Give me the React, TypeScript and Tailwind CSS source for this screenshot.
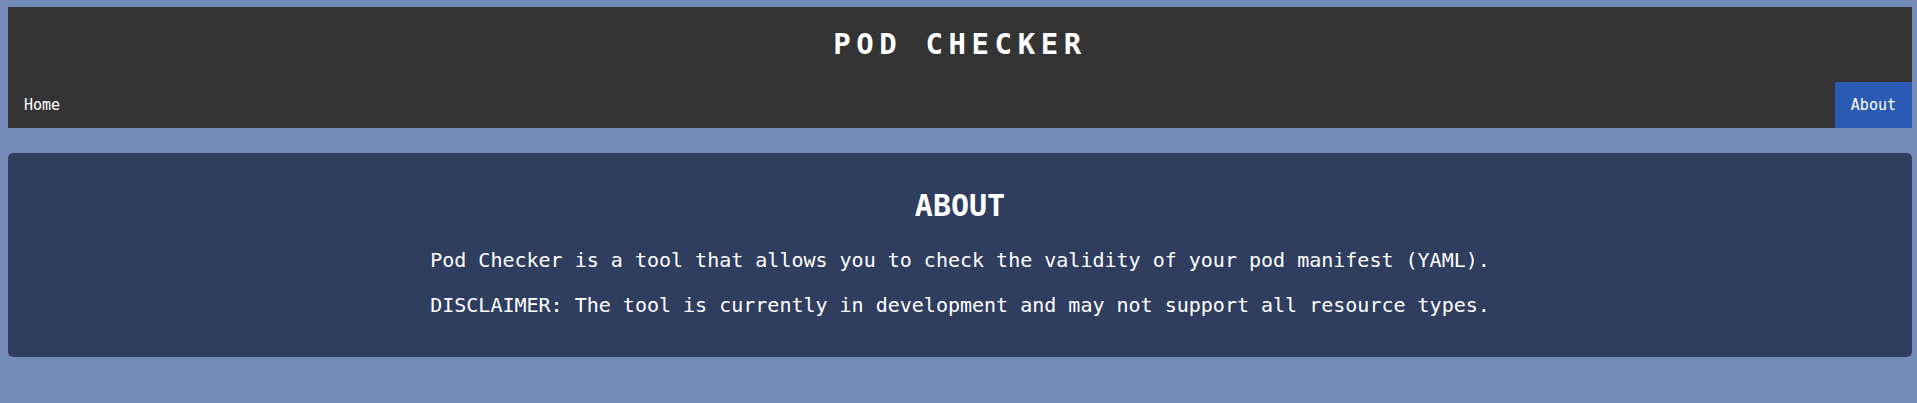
export default function App() {
  return (
    <div
      className="min-h-[403px] bg-[#748bb8] pt-[7px] pl-2 pr-[5px] text-white"
      style={{ fontFamily: '"DejaVu Sans Mono", monospace' }}
    >
      <header className="bg-[#333333]">
        <div className="h-[75px] flex items-center justify-center">
          <h1 className="text-[29px] font-bold tracking-[5.6px]">POD CHECKER</h1>
        </div>
        <nav className="flex justify-between text-[15px]">
          <a href="#" className="px-4 py-[14px] leading-[18px]">
            Home
          </a>
          <a href="#" className="bg-[#2b5ab4] px-4 py-[14px] leading-[18px]">
            About
          </a>
        </nav>
      </header>

      <main className="mt-[25px] rounded-[5px] bg-[#2f3d5f] pt-[36px] pb-[40px] text-center">
        <h2 className="text-[30px] font-bold leading-[34px]">ABOUT</h2>
        <p className="mt-[25px] text-[20px] leading-[24px]">
          Pod Checker is a tool that allows you to check the validity of your pod manifest (YAML).
        </p>
        <p className="mt-[21px] text-[20px] leading-[24px]">
          DISCLAIMER: The tool is currently in development and may not support all resource types.
        </p>
      </main>
    </div>
  )
}
